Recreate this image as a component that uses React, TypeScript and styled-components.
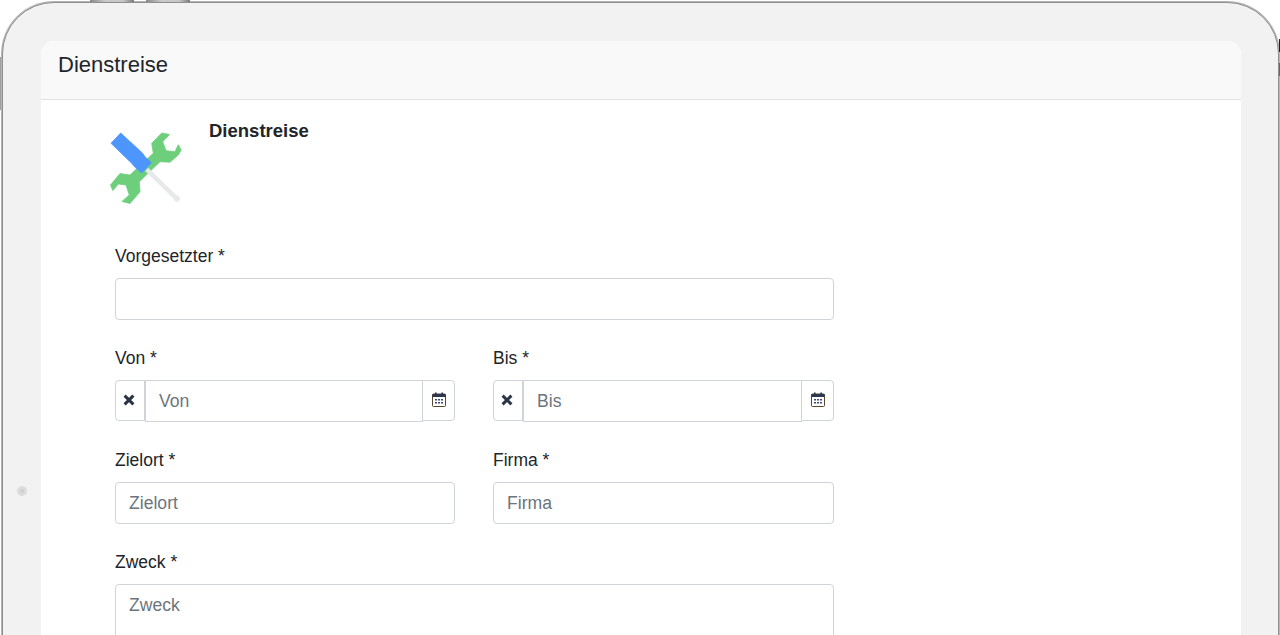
import styled, { createGlobalStyle } from 'styled-components'

const GlobalStyle = createGlobalStyle`
  html, body {
    margin: 0;
    height: 100%;
    overflow: hidden;
    background: #fff;
    font-family: "Liberation Sans", Arial, sans-serif;
    color: #212529;
  }
`

const Device = styled.div`
  position: relative;
  box-sizing: border-box;
  width: 1277px;
  height: 900px;
  margin: 2px 0 0 2px;
  padding: 38px 37px 0 38px;
  background: #f2f2f2;
  border: 1px solid #8f8f8f;
  border-radius: 52px;
  box-shadow: 0 0 0 1px #b5b5b5;
`

const TopKey = styled.span<{ $left: number }>`
  position: absolute;
  top: -3px;
  left: ${p => p.$left}px;
  width: 44px;
  height: 2px;
  background: linear-gradient(90deg, #8a8a8a, #c8c8c8 35%, #c8c8c8 75%, #7a7a7a);
`

const LeftKey = styled.span`
  position: absolute;
  top: 54px;
  left: -3px;
  width: 1px;
  height: 53px;
  background: #a0a0a0;
`

const RightKeys = styled.span`
  position: absolute;
  top: 36px;
  right: -2px;
  width: 1px;
  height: 600px;
  background: linear-gradient(
    180deg,
    #222 0 13px,
    #b8b8b8 13px 24px,
    #666 24px 37px,
    #b8b8b8 37px
  );
`

const Camera = styled.span`
  position: absolute;
  left: 14px;
  top: 483px;
  width: 10px;
  height: 10px;
  border-radius: 50%;
  background: #dcdcdc;
  display: flex;
  align-items: center;
  justify-content: center;

  &::after {
    content: '';
    width: 4px;
    height: 4px;
    border-radius: 50%;
    background: #cfcfcf;
  }
`

const Card = styled.div`
  background: #fff;
  border-radius: 14px 14px 0 0;
  height: 800px;
`

const CardHeader = styled.div`
  box-sizing: border-box;
  height: 59px;
  padding: 11px 17px 0;
  background: #f9f9f9;
  border-bottom: 1px solid #e2e2e2;
  border-radius: 14px 14px 0 0;
  font-size: 22px;
  line-height: 26px;
`

const CardBody = styled.div`
  padding: 20px 0 0 74px;
  width: 719px;
`

const Intro = styled.div`
  display: flex;
  align-items: flex-start;
  margin-left: -5px;
  margin-bottom: 40px;
  height: 84px;
`

const IntroTitle = styled.h2`
  margin: 1px 0 0 27px;
  font-size: 18.5px;
  line-height: 20px;
  font-weight: 700;
`

const Row = styled.div`
  display: grid;
  grid-template-columns: 340px 341px;
  column-gap: 38px;
`

const Field = styled.div`
  margin-bottom: 26px;
`

const Label = styled.label`
  display: block;
  font-size: 17.5px;
  line-height: 24px;
  margin-bottom: 10px;
`

const Input = styled.input`
  display: block;
  box-sizing: border-box;
  width: 100%;
  height: 42px;
  padding: 0 13px;
  font: 17.6px "Liberation Sans", Arial, sans-serif;
  border: 1px solid #ced4da;
  border-radius: 4px;
  background: #fff;

  &::placeholder {
    color: #6c757d;
    opacity: 1;
  }
`

const TextArea = styled.textarea`
  display: block;
  box-sizing: border-box;
  width: 100%;
  height: 100px;
  padding: 10px 13px;
  font: 17.6px "Liberation Sans", Arial, sans-serif;
  border: 1px solid #ced4da;
  border-radius: 4px;
  resize: none;

  &::placeholder {
    color: #6c757d;
    opacity: 1;
  }
`

const DateGroup = styled.div`
  display: flex;
  align-items: flex-start;
`

const AddonButton = styled.button<{ $side: 'left' | 'right' }>`
  flex: none;
  box-sizing: border-box;
  position: relative;
  width: ${p => (p.$side === 'left' ? 30 : 33)}px;
  margin-left: ${p => (p.$side === 'left' ? 0 : -1)}px;
  height: 41px;
  padding: 0 ${p => (p.$side === 'left' ? 2 : 0)}px 2px 0;
  display: flex;
  align-items: center;
  justify-content: center;
  background: #fff;
  border: 1px solid #ced4da;
  border-radius: ${p => (p.$side === 'left' ? '4px 0 0 4px' : '0 4px 4px 0')};
`

const DateInput = styled(Input)`
  flex: 1;
  min-width: 0;
  width: auto;
  border-radius: 0;
`

const ToolsGraphic = styled.svg`
  flex: none;
  margin-top: 12px;
`

const ClearIcon = () => (
  <svg width="12" height="12" viewBox="0 0 12 12">
    <path d="M1.6 1.6l8.8 8.8M10.4 1.6l-8.8 8.8" stroke="#2a3444" strokeWidth="3" fill="none" />
  </svg>
)

const CalendarIcon = () => (
  <svg width="14" height="15" viewBox="0 0 14 15">
    <rect x="0.5" y="2" width="13" height="12.5" rx="1" fill="#fff" stroke="#5a4630" />
    <rect x="0.5" y="2" width="13" height="3" fill="#2c3850" />
    <rect x="3" y="0.5" width="1.6" height="3" fill="#2c3850" />
    <rect x="9.4" y="0.5" width="1.6" height="3" fill="#2c3850" />
    <path d="M3 7h2v1.6H3zM6 7h2v1.6H6zM9 7h2v1.6H9zM3 10h2v1.6H3zM6 10h2v1.6H6zM9 10h2v1.6H9z" fill="#3c4a78" />
  </svg>
)

const ToolsIcon = () => (
  <ToolsGraphic width="72" height="72" viewBox="0 0 72 72">
    <path
      d="M51.7 1 59.5 2.4 52.7 9.7 56 18.7 65 19.7 68.3 12.8 71.2 18 68.3 23 60 30.2 50 29.7 29.3 49.7 30 59.7 20 71.5 12 69.4 19.3 63 16 53 8.3 52 2.9 58.6.5 53 10 41.6 20 43 43.3 21.3 41.7 11.3z"
      fill="#6dce7c"
      stroke="#6dce7c"
      strokeWidth="0.8"
      strokeLinejoin="round"
    />
    <path d="M36.7 37.3 66.5 66.3" stroke="#e6e8ea" strokeWidth="4.4" fill="none" />
    <circle cx="66.8" cy="66.6" r="3.1" fill="#e6e8ea" />
    <path
      d="M1 11.3 10.7 1 32.7 21.3 35 24.7 41.4 30.7 31.7 41 25 35.3 21.7 31.3z"
      fill="#4d96ff"
      stroke="#4d96ff"
      strokeWidth="0.8"
      strokeLinejoin="round"
    />
  </ToolsGraphic>
)

const DateField = ({ label }: { label: string }) => (
  <Field>
    <Label>{label} *</Label>
    <DateGroup>
      <AddonButton $side="left"><ClearIcon /></AddonButton>
      <DateInput placeholder={label} readOnly />
      <AddonButton $side="right"><CalendarIcon /></AddonButton>
    </DateGroup>
  </Field>
)

const App = () => {
  return (
    <>
      <GlobalStyle />
      <Device>
        <TopKey $left={87} />
        <TopKey $left={143} />
        <LeftKey />
        <RightKeys />
        <Camera />
        <Card>
          <CardHeader>Dienstreise</CardHeader>
          <CardBody>
            <Intro>
              <ToolsIcon />
              <IntroTitle>Dienstreise</IntroTitle>
            </Intro>
            <Field>
              <Label>Vorgesetzter *</Label>
              <Input />
            </Field>
            <Row>
              <DateField label="Von" />
              <DateField label="Bis" />
            </Row>
            <Row>
              <Field>
                <Label>Zielort *</Label>
                <Input placeholder="Zielort" />
              </Field>
              <Field>
                <Label>Firma *</Label>
                <Input placeholder="Firma" />
              </Field>
            </Row>
            <Field>
              <Label>Zweck *</Label>
              <TextArea placeholder="Zweck" />
            </Field>
          </CardBody>
        </Card>
      </Device>
    </>
  )
}

export default App
